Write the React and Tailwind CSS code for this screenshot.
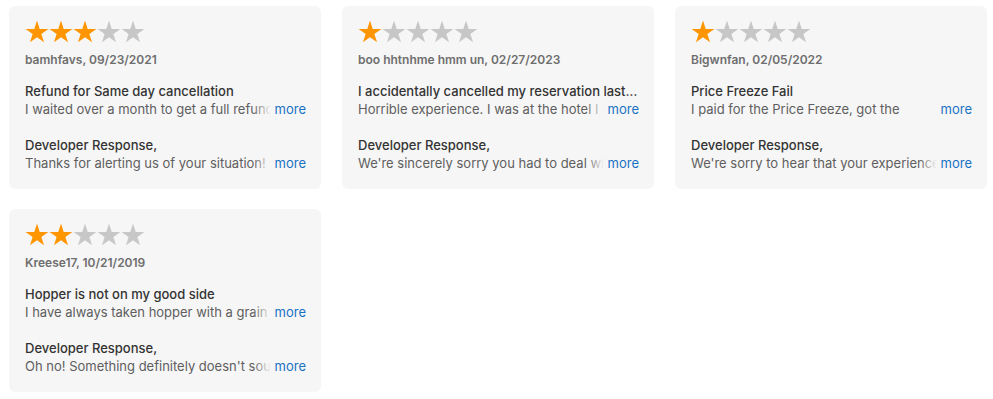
import React from 'react';

const reviews = [
    {
        rating: 3,
        author: 'bamhfavs, 09/23/2021',
        title: 'Refund for Same day cancellation',
        body: 'I waited over a month to get a full refund dor my same day cancellation and still nothing came back to me.',
        response: 'Thanks for alerting us of your situation! Our team would love to take a closer look at this for you.',
    },
    {
        rating: 1,
        author: 'boo hhtnhme hmm un, 02/27/2023',
        title: 'I accidentally cancelled my reservation last night and could not get it back',
        body: 'Horrible experience. I was at the hotel I was supposed to stay at and they had no record of it.',
        response: "We're sincerely sorry you had to deal with this. Please reach out to our support team.",
    },
    {
        rating: 1,
        author: 'Bigwnfan, 02/05/2022',
        title: 'Price Freeze Fail',
        body: 'I paid for the Price Freeze, got the confirmation email and then the price went up anyway.',
        response: "We're sorry to hear that your experience with Price Freeze was not what you expected.",
    },
    {
        rating: 2,
        author: 'Kreese17, 10/21/2019',
        title: 'Hopper is not on my good side',
        body: 'I have always taken hopper with a grain of salt but this time it really let me down.',
        response: "Oh no! Something definitely doesn't sound right here. Please send us a message.",
    },
];

const Star = ({ filled }) => (
    <svg width="24" height="24" viewBox="0 0 24 24" className="block">
        <polygon
            points="12,0.6 14.69,8.89 23.41,8.89 16.36,14.02 19.05,22.31 12,17.18 4.95,22.31 7.64,14.02 0.59,8.89 9.31,8.89"
            fill={filled ? '#ff9500' : '#c7c7c7'}
        />
    </svg>
);

// body text is clamped to one line, the "more" link sits over its end with a fade
const Clamped = ({ text }) => (
    <div className="relative h-[18px] overflow-hidden">
        <p className="text-[13px] leading-[18px] text-[#5e5e5e]">{text}</p>
        <button className="absolute right-0 top-0 pl-[22px] text-[13px] leading-[18px] text-[#1a72c4] bg-[linear-gradient(to_right,rgba(246,246,246,0),#f6f6f6_18px)]">
            more
        </button>
    </div>
);

const ReviewCard = ({ review }) => (
    <div className="h-[183px] rounded-[6px] bg-[#f6f6f6] pl-4 pr-[15px] pt-[14px]">
        <div className="flex h-6">
            {[1, 2, 3, 4, 5].map(i => <Star key={i} filled={i <= review.rating} />)}
        </div>
        <div className="mt-2 text-[12px] leading-4 font-semibold text-[#6e6e6e]">{review.author}</div>
        <div className="mt-[14px] truncate text-[13px] leading-[18px] font-medium text-[#333333]">{review.title}</div>
        <Clamped text={review.body} />
        <div className="mt-[18px] text-[13px] leading-[18px] font-medium text-[#333333]">Developer Response,</div>
        <Clamped text={review.response} />
    </div>
);

export default function App() {
    return (
        <div className="min-h-screen bg-white font-['Inter',sans-serif] pl-[9px] pt-[6px]">
            <div className="grid grid-cols-[repeat(3,312px)] gap-x-[21px] gap-y-5">
                {reviews.map((r, i) => <ReviewCard key={i} review={r} />)}
            </div>
        </div>
    );
}
